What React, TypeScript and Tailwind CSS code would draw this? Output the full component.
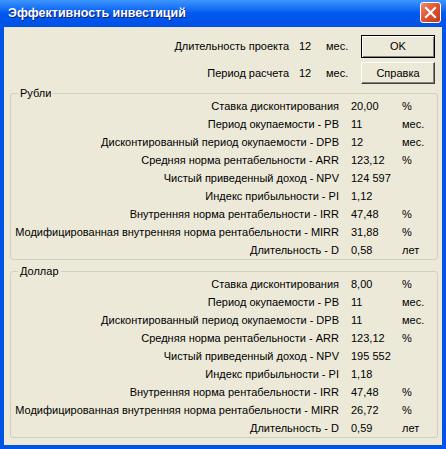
const rub = [
  ["Ставка дисконтирования", "20,00", "%"],
  ["Период окупаемости - PB", "11", "мес."],
  ["Дисконтированный период окупаемости - DPB", "12", "мес."],
  ["Средняя норма рентабельности - ARR", "123,12", "%"],
  ["Чистый приведенный доход - NPV", "124 597", ""],
  ["Индекс прибыльности - PI", "1,12", ""],
  ["Внутренняя норма рентабельности - IRR", "47,48", "%"],
  ["Модифицированная внутренняя норма рентабельности - MIRR", "31,88", "%"],
  ["Длительность - D", "0,58", "лет"],
];

const usd = [
  ["Ставка дисконтирования", "8,00", "%"],
  ["Период окупаемости - PB", "11", "мес."],
  ["Дисконтированный период окупаемости - DPB", "11", "мес."],
  ["Средняя норма рентабельности - ARR", "123,12", "%"],
  ["Чистый приведенный доход - NPV", "195 552", ""],
  ["Индекс прибыльности - PI", "1,18", ""],
  ["Внутренняя норма рентабельности - IRR", "47,48", "%"],
  ["Модифицированная внутренняя норма рентабельности - MIRR", "26,72", "%"],
  ["Длительность - D", "0,59", "лет"],
];

function Group({ title, rows }: { title: string; rows: string[][] }) {
  return (
    <div className="relative ml-[6px] w-[428px] h-[167px] border border-[#d0d0bf] rounded-[3px] pt-[3px]">
      <span className="absolute left-[7px] top-[-9px] px-[2px] bg-[#ece9d8] leading-[16px]">{title}</span>
      {rows.map((r, i) => (
        <div key={i} className="flex h-[18px] items-center">
          <div className="w-[328px] text-right whitespace-nowrap">{r[0]}</div>
          <div className="w-[51px] ml-[12px]">{r[1]}</div>
          <div>{r[2]}</div>
        </div>
      ))}
    </div>
  );
}

export default function App() {
  return (
    <div className="w-[446px] h-[449px] bg-[#0054e3] flex flex-col font-['Liberation_Sans',sans-serif] text-[11px] text-black">
      {/* title bar */}
      <div className="h-[27px] flex items-center justify-between pl-[8px] pr-[5px] bg-gradient-to-b from-[#3d95ff] via-[#0058ee] to-[#0050e6]">
        <span className="text-white font-bold text-[12.5px] [text-shadow:1px_1px_#0a1e78]">Эффективность инвестиций</span>
        <div className="w-[21px] h-[21px] rounded-[3px] border border-white bg-gradient-to-br from-[#f0896d] via-[#e0502f] to-[#c23a1c] flex items-center justify-center mb-[3px]">
          <svg width="13" height="13" viewBox="0 0 13 13">
            <path d="M2 2 L11 11 M11 2 L2 11" stroke="white" strokeWidth="2.2" strokeLinecap="square" />
          </svg>
        </div>
      </div>

      {/* body */}
      <div className="flex-1 mx-[4px] mb-[4px] bg-[#ece9d8] flex flex-col">
        <div className="pt-[8px] flex flex-col gap-[4px]">
          <div className="flex items-center h-[23px]">
            <div className="w-[285px] text-right">Длительность проекта</div>
            <div className="ml-[10px] w-[27px]">12</div>
            <div className="w-[35px]">мес.</div>
            <button className="w-[74px] h-[23px] border border-black bg-[#ece9d8] shadow-[inset_1px_1px_#ffffff,inset_-1px_-1px_#808080]">OK</button>
          </div>
          <div className="flex items-center h-[22px]">
            <div className="w-[285px] text-right">Период расчета</div>
            <div className="ml-[10px] w-[27px]">12</div>
            <div className="w-[35px]">мес.</div>
            <button className="w-[74px] h-[22px] border border-t-white border-l-white border-r-[#404040] border-b-[#404040] bg-[#ece9d8] shadow-[inset_-1px_-1px_#808080]">Справка</button>
          </div>
        </div>

        <div className="mt-[9px]">
          <Group title="Рубли" rows={rub} />
        </div>
        <div className="mt-[11px]">
          <Group title="Доллар" rows={usd} />
        </div>
      </div>
    </div>
  );
}
